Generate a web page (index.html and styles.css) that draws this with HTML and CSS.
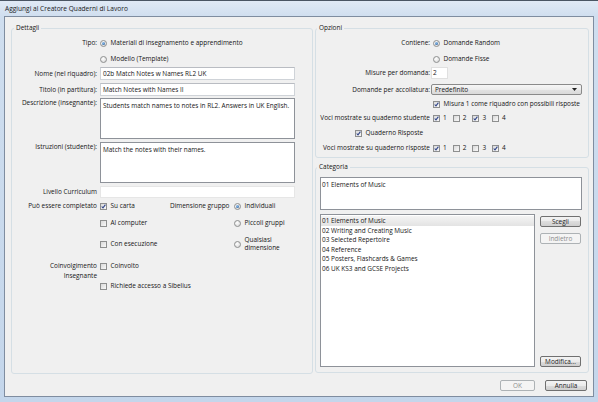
FILE: index.html
```html
<!DOCTYPE html>
<html>
<head>
<meta charset="utf-8">
<link rel="stylesheet" href="styles.css">
</head>
<body>
<div class="window">
  <div class="titlebar">Aggiungi al Creatore Quaderni di Lavoro</div>
  <div class="client">
    <div class="columns">
      <fieldset class="group details">
        <legend>Dettagli</legend>
        <div class="row r-tipo"><span class="lbl">Tipo:</span><span class="opt"><span class="rb on"></span>Materiali di insegnamento e apprendimento</span></div>
        <div class="row r-modello"><span class="lbl"></span><span class="opt"><span class="rb"></span>Modello (Template)</span></div>
        <div class="row r-nome"><span class="lbl">Nome (nel riquadro):</span><div class="field">02b Match Notes w Names RL2 UK</div></div>
        <div class="row r-titolo"><span class="lbl">Titolo (in partitura):</span><div class="field">Match Notes with Names II</div></div>
        <div class="row r-area"><span class="lbl">Descrizione (insegnante):</span><div class="area">Students match names to notes in RL2. Answers in UK English.</div></div>
        <div class="row r-area r-istr"><span class="lbl">Istruzioni (studente):</span><div class="area">Match the notes with their names.</div></div>
        <div class="row r-liv"><span class="lbl">Livello Curriculum</span><div class="field blank"></div></div>
        <div class="row r-compl">
          <span class="lbl">Può essere completato</span>
          <div class="stack checks">
            <span class="opt"><span class="cb"><svg viewBox="0 0 5 5"><path d="M0.7 2.5 2 3.9 4.4 0.7"/></svg></span>Su carta</span>
            <span class="opt gap5"><span class="cb"></span>Al computer</span>
            <span class="opt gap9"><span class="cb"></span>Con esecuzione</span>
          </div>
          <span class="lbl2">Dimensione gruppo</span>
          <div class="stack radios">
            <span class="opt"><span class="rb on"></span>Individuali</span>
            <span class="opt gap5"><span class="rb"></span>Piccoli gruppi</span>
            <span class="opt gap9"><span class="rb"></span><span class="two">Qualsiasi<br>dimensione</span></span>
          </div>
        </div>
        <div class="row r-coinv">
          <span class="lbl">Coinvolgimento<br>Insegnante</span>
          <div class="stack">
            <span class="opt"><span class="cb"></span>Coinvolto</span>
            <span class="opt gap8"><span class="cb"></span>Richiede accesso a Sibelius</span>
          </div>
        </div>
      </fieldset>

      <div class="rightcol">
        <fieldset class="group options">
          <legend>Opzioni</legend>
          <div class="row o1"><span class="olbl">Contiene:</span><span class="opt ind"><span class="rb on"></span>Domande Random</span></div>
          <div class="row o2"><span class="olbl"></span><span class="opt ind"><span class="rb"></span>Domande Fisse</span></div>
          <div class="row o3"><span class="olbl">Misure per domanda:</span><div class="num">2</div></div>
          <div class="row o4"><span class="olbl">Domande per accollatura:</span><div class="select"><span>Predefinito</span><svg class="arrow" viewBox="0 0 5 3"><path d="M0 0H5L2.5 3Z"/></svg></div></div>
          <div class="row o5"><span class="olbl"></span><span class="opt ind"><span class="cb"><svg viewBox="0 0 5 5"><path d="M0.7 2.5 2 3.9 4.4 0.7"/></svg></span>Misura 1 come riquadro con possibili risposte</span></div>
          <div class="row o6"><span class="olbl">Voci mostrate su quaderno studente</span>
            <div class="nums">
              <span class="opt"><span class="cb"><svg viewBox="0 0 5 5"><path d="M0.7 2.5 2 3.9 4.4 0.7"/></svg></span>1</span>
              <span class="opt"><span class="cb"></span>2</span>
              <span class="opt"><span class="cb"><svg viewBox="0 0 5 5"><path d="M0.7 2.5 2 3.9 4.4 0.7"/></svg></span>3</span>
              <span class="opt"><span class="cb"></span>4</span>
            </div>
          </div>
          <div class="row o7"><span class="opt quad"><span class="cb"><svg viewBox="0 0 5 5"><path d="M0.7 2.5 2 3.9 4.4 0.7"/></svg></span>Quaderno Risposte</span></div>
          <div class="row o8"><span class="olbl">Voci mostrate su quaderno risposte</span>
            <div class="nums">
              <span class="opt"><span class="cb"><svg viewBox="0 0 5 5"><path d="M0.7 2.5 2 3.9 4.4 0.7"/></svg></span>1</span>
              <span class="opt"><span class="cb"></span>2</span>
              <span class="opt"><span class="cb"></span>3</span>
              <span class="opt"><span class="cb"><svg viewBox="0 0 5 5"><path d="M0.7 2.5 2 3.9 4.4 0.7"/></svg></span>4</span>
            </div>
          </div>
        </fieldset>

        <fieldset class="group category">
          <legend>Categoria</legend>
          <div class="catbox">01 Elements of Music</div>
          <div class="catrow">
            <div class="list">
              <div class="item sel">01 Elements of Music</div>
              <div class="item">02 Writing and Creating Music</div>
              <div class="item">03 Selected Repertoire</div>
              <div class="item">04 Reference</div>
              <div class="item">05 Posters, Flashcards &amp; Games</div>
              <div class="item">06 UK KS3 and GCSE Projects</div>
            </div>
            <div class="btns">
              <button class="btn b-scegli">Scegli</button>
              <button class="btn dis b-indietro">Indietro</button>
              <button class="btn b-mod">Modifica...</button>
            </div>
          </div>
        </fieldset>
      </div>
    </div>
    <div class="footer">
      <button class="btn dis b-ok">OK</button>
      <button class="btn b-annulla">Annulla</button>
    </div>
  </div>
</div>
</body>
</html>
```

FILE: styles.css
```css
* { box-sizing: border-box; }
html, body { margin: 0; padding: 0; }
body {
  width: 598px;
  height: 402px;
  overflow: hidden;
  font-family: "Open Sans", "Noto Sans", sans-serif;
  font-size: 6.45px;
  color: #151515;
  background: #c4d5ea;
}
.window {
  width: 598px;
  height: 402px;
  display: flex;
  flex-direction: column;
  border-top: 1px solid #4a5563;
  padding: 0 4px 5px 4px;
  background: linear-gradient(180deg, #e0e9f5 0, #cfdeef 16px, #c4d6eb 100%);
}
.titlebar {
  height: 15px;
  line-height: 15px;
  padding-left: 1px;
  font-size: 6.6px;
  color: #1b1b1b;
  white-space: nowrap;
}
.client {
  flex: 1;
  min-height: 0;
  border: 1px solid #7f8da0;
  background: #f0f0f0;
  padding: 6px 4px 0 6px;
  display: flex;
  flex-direction: column;
}
.columns {
  display: grid;
  grid-template-columns: 302px 274px;
  column-gap: 2px;
  align-items: start;
}
.group {
  margin: 0;
  padding: 0;
  border: 1px solid #d5dfe5;
  border-radius: 3px;
  min-width: 0;
}
legend {
  padding: 0 2px;
  margin-left: 1px;
  height: 10px;
  line-height: 10px;
}
.details legend { margin-left: 2px; }
.details { height: 351px; }
.rightcol { display: flex; flex-direction: column; }
.options { height: 135px; }
.category { height: 211px; margin-top: 4px; display: block; }

.row {
  display: flex;
  align-items: center;
  height: 12px;
  line-height: 10px;
  white-space: nowrap;
}
.lbl {
  width: 86px;
  flex: none;
  text-align: right;
  padding-right: 1px;
  margin-right: 2px;
}
.r-tipo { margin-top: 4px; }
.r-modello { margin-top: 4px; }
.r-nome { margin-top: 2px; height: 13px; }
.r-titolo { margin-top: 3px; height: 13px; }
.r-area { margin-top: 2px; height: 41px; align-items: flex-start; }
.r-istr { margin-top: 3px; }
.r-liv { margin-top: 3px; }
.r-compl { margin-top: 2px; height: auto; align-items: flex-start; }
.r-compl .lbl { line-height: 12px; }
.r-coinv { margin-top: 10px; height: auto; align-items: flex-start; }
.r-coinv .lbl { margin-top: 1px; }

.field {
  width: 195px;
  height: 100%;
  background: #fff;
  border: 1px solid #cfd3d8;
  border-top-color: #b9bcc2;
  padding: 0 2px;
  line-height: 11px;
}
.field.blank { border-color: #e6e6e6; }
.area {
  width: 195px;
  height: 41px;
  background: #fff;
  border: 1px solid #8e9299;
  padding: 2px;
  line-height: 10px;
  white-space: normal;
}

.stack { display: flex; flex-direction: column; }
.opt {
  display: flex;
  align-items: center;
  gap: 3.5px;
  height: 12px;
}
.gap5 { margin-top: 5px; }
.gap9 { margin-top: 9px; }
.gap8 { margin-top: 8px; }
.checks { width: 70px; }
.lbl2 { width: 63px; flex: none; line-height: 12px; }
.radios .opt { margin-left: 1px; }
.two { line-height: 8px; }

.cb {
  width: 7px;
  height: 7px;
  flex: none;
  border: 1px solid #8e8f8f;
  background: linear-gradient(135deg, #d9d9d9, #f9f9f9);
  display: flex;
  align-items: center;
  justify-content: center;
}
.cb svg { width: 5px; height: 5px; display: block; }
.cb path { fill: none; stroke: #33478a; stroke-width: 1.1; }
.rb {
  width: 7px;
  height: 7px;
  flex: none;
  border-radius: 50%;
  border: 1px solid #8e8f8f;
  background: radial-gradient(circle at 40% 35%, #fff, #d3d3d3);
  display: flex;
  align-items: center;
  justify-content: center;
}
.rb.on::after {
  content: "";
  width: 3px;
  height: 3px;
  border-radius: 50%;
  background: radial-gradient(circle at 40% 35%, #93c5f2, #1b4f8e);
}

.olbl {
  width: 115px;
  flex: none;
  text-align: right;
  padding-right: 1px;
}
.ind { margin-left: 2px; }
.o1 { margin-top: 4px; }
.o2 { margin-top: 4px; }
.o3 { margin-top: 2px; }
.o4 { margin-top: 5px; height: 11px; }
.o5 { margin-top: 3px; }
.o6 { margin-top: 2px; }
.o7 { margin-top: 3px; }
.o8 { margin-top: 3px; }
.num {
  width: 17px;
  height: 12px;
  background: #fff;
  border: 1px solid #e0e0e0;
  padding-left: 1px;
  line-height: 10px;
}
.select {
  width: 151px;
  height: 11px;
  border: 1px solid #8a8a8a;
  border-radius: 2px;
  background: linear-gradient(#f6f6f6, #ececec 50%, #e2e2e2 50%, #dadada);
  display: flex;
  align-items: center;
  justify-content: space-between;
  padding: 0 4px 0 3px;
  line-height: 9px;
}
.arrow { width: 5px; height: 3px; display: block; }
.arrow path { fill: #222; }
.nums { display: flex; margin-left: 2px; }
.nums .opt { width: 19.7px; flex: none; gap: 3px; }
.quad { margin-left: 39px; }

.catbox {
  margin: 5px 6px 0 4px;
  height: 33px;
  background: #fff;
  border: 1px solid #8e9299;
  padding: 2px 1px;
  line-height: 10px;
}
.catrow {
  display: flex;
  margin: 4px 6px 0 4px;
  height: 153px;
}
.list {
  width: 215px;
  height: 153px;
  flex: none;
  background: #fff;
  border: 1px solid #8e9299;
  padding: 1px 0;
}
.item {
  height: 9.6px;
  line-height: 9.6px;
  padding-left: 1px;
  white-space: nowrap;
}
.item.sel {
  background: linear-gradient(#f4f4f4, #e3e3e3);
}
.btns {
  margin-left: 5px;
  width: 41px;
  display: flex;
  flex-direction: column;
}
.btn {
  font: inherit;
  color: #1e1e1e;
  height: 11px;
  padding: 0;
  line-height: 9px;
  border: 1px solid #707070;
  border-radius: 2px;
  background: linear-gradient(#f3f3f3, #ebebeb 50%, #dddddd 50%, #cfcfcf);
}
.btn.dis {
  border-color: #adb2b5;
  background: #f4f4f4;
  color: #8d8d8d;
}
.b-scegli { margin-top: 2px; }
.b-indietro { margin-top: 6px; }
.b-mod { margin-top: auto; }
.footer {
  display: flex;
  justify-content: flex-end;
  gap: 10px;
  margin-top: 6px;
  padding-right: 2px;
}
.b-ok { width: 35px; }
.b-annulla { width: 42px; }
```
